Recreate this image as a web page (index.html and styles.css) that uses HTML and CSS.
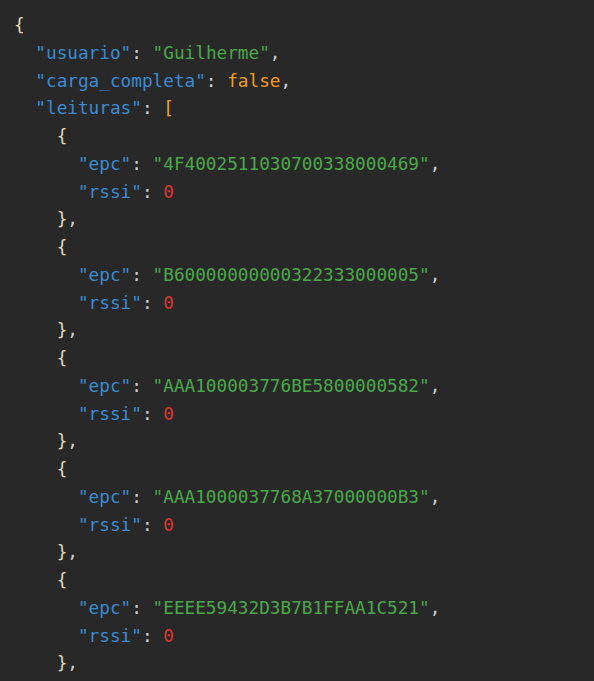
FILE: index.html
```html
<!DOCTYPE html>
<html>
<head>
<meta charset="utf-8">
<link rel="stylesheet" href="styles.css">
</head>
<body>
<pre class="code"><span class="br">{</span>
  <span class="k">"usuario"</span><span class="p">: </span><span class="s">"Guilherme"</span><span class="p">,</span>
  <span class="k">"carga_completa"</span><span class="p">: </span><span class="b">false</span><span class="p">,</span>
  <span class="k">"leituras"</span><span class="p">: </span><span class="sq">[</span>
    <span class="br">{</span>
      <span class="k">"epc"</span><span class="p">: </span><span class="s">"4F4002511030700338000469"</span><span class="p">,</span>
      <span class="k">"rssi"</span><span class="p">: </span><span class="n">0</span>
    <span class="br">}</span><span class="p">,</span>
    <span class="br">{</span>
      <span class="k">"epc"</span><span class="p">: </span><span class="s">"B60000000000322333000005"</span><span class="p">,</span>
      <span class="k">"rssi"</span><span class="p">: </span><span class="n">0</span>
    <span class="br">}</span><span class="p">,</span>
    <span class="br">{</span>
      <span class="k">"epc"</span><span class="p">: </span><span class="s">"AAA100003776BE5800000582"</span><span class="p">,</span>
      <span class="k">"rssi"</span><span class="p">: </span><span class="n">0</span>
    <span class="br">}</span><span class="p">,</span>
    <span class="br">{</span>
      <span class="k">"epc"</span><span class="p">: </span><span class="s">"AAA1000037768A37000000B3"</span><span class="p">,</span>
      <span class="k">"rssi"</span><span class="p">: </span><span class="n">0</span>
    <span class="br">}</span><span class="p">,</span>
    <span class="br">{</span>
      <span class="k">"epc"</span><span class="p">: </span><span class="s">"EEEE59432D3B7B1FFAA1C521"</span><span class="p">,</span>
      <span class="k">"rssi"</span><span class="p">: </span><span class="n">0</span>
    <span class="br">}</span><span class="p">,</span></pre>
</body>
</html>
```
FILE: styles.css
```css
html, body {
  margin: 0;
  padding: 0;
  background: #282828;
  overflow: hidden;
  height: 100%;
}
.code {
  margin: 0;
  padding: 12px 0 0 14px;
  font-family: "DejaVu Sans Mono", "Liberation Mono", monospace;
  font-size: 17.72px;
  line-height: 27.75px;
  color: #d4d4d4;
  white-space: pre;
}
.br { color: #e2d7b5; }
.sq { color: #e8a33c; }
.k { color: #3b8bd2; }
.s { color: #4aa84a; }
.b { color: #f59b1f; }
.n { color: #dc3530; }
.p { color: #cfcfcf; }
```
